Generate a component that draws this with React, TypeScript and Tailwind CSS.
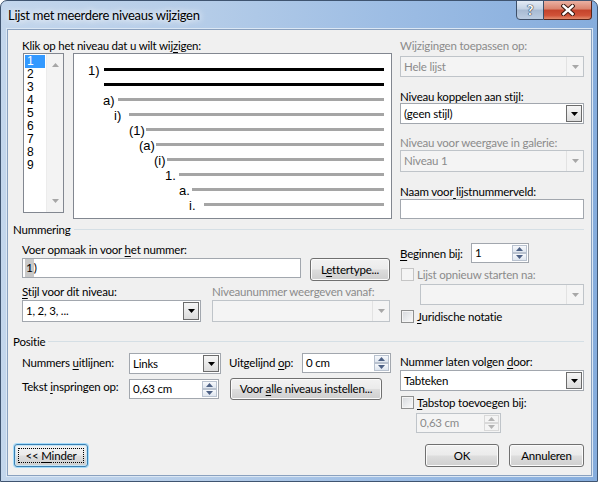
import React from 'react'

const UI = "font-['Lato','Noto_Sans',sans-serif] text-[11.5px] tracking-[-0.2px]"

function U({ children }: { children: React.ReactNode }) {
  return <span className="underline decoration-1 underline-offset-[2px]">{children}</span>
}

function Label({
  children,
  disabled,
  className = ''
}: {
  children: React.ReactNode
  disabled?: boolean
  className?: string
}) {
  return (
    <div
      className={`h-[13px] shrink-0 whitespace-nowrap leading-[13px] ${
        disabled ? 'text-[#8b8b8b]' : 'text-black'
      } ${className}`}
    >
      {children}
    </div>
  )
}

function Tri({ up, color }: { up?: boolean; color: string }) {
  return (
    <svg width="7" height="4" viewBox="0 0 7 4">
      <polygon points={up ? '0,4 7,4 3.5,0' : '0,0 7,0 3.5,4'} fill={color} />
    </svg>
  )
}

function Combo({
  text,
  disabled,
  className = ''
}: {
  text?: string
  disabled?: boolean
  className?: string
}) {
  return (
    <div
      className={`flex shrink-0 border ${
        disabled ? 'border-[#bfc4c9] bg-[#f4f4f4]' : 'border-[#a2a7ae] bg-white'
      } ${className}`}
    >
      <div
        className={`flex flex-1 items-center pl-[3px] whitespace-nowrap ${
          disabled ? 'text-[#8b8b8b]' : 'text-black'
        }`}
      >
        <span>{text}</span>
      </div>
      {disabled ? (
        <div className="flex w-[17px] items-center justify-center border-l border-[#e2e2e2]">
          <Tri color="#a7a7a7" />
        </div>
      ) : (
        <div className="my-px mr-px flex w-[16px] items-center justify-center border border-[#6b6b6b] bg-[linear-gradient(#f6f6f6,#dcdcdc)]">
          <Tri color="#000" />
        </div>
      )}
    </div>
  )
}

function Spin({
  text,
  disabled,
  className = ''
}: {
  text: string
  disabled?: boolean
  className?: string
}) {
  const arrow = disabled ? '#b3b3b3' : '#4d6185'
  const half = disabled
    ? 'flex flex-1 items-center justify-center border border-[#d9d9d9] bg-[#f4f4f4]'
    : 'flex flex-1 items-center justify-center border border-[#b9c2cf] bg-[linear-gradient(#f7f9fc,#dfe6ef)]'
  return (
    <div
      className={`flex shrink-0 border ${
        disabled ? 'border-[#bfc4c9] bg-[#f4f4f4]' : 'border-[#a2a7ae] bg-white'
      } ${className}`}
    >
      <div
        className={`flex flex-1 items-center pl-[3px] whitespace-nowrap ${
          disabled ? 'text-[#8b8b8b]' : 'text-black'
        }`}
      >
        <span>{text}</span>
      </div>
      <div className="my-px mr-px flex w-[15px] flex-col">
        <div className={half}>
          <Tri up color={arrow} />
        </div>
        <div className={half}>
          <Tri color={arrow} />
        </div>
      </div>
    </div>
  )
}

function Btn({
  children,
  focused,
  className = ''
}: {
  children: React.ReactNode
  focused?: boolean
  className?: string
}) {
  return (
    <div
      className={`flex shrink-0 items-center justify-center rounded-[3px] border bg-[linear-gradient(180deg,#f2f2f2_0%,#ebebeb_48%,#dddddd_52%,#cfcfcf_100%)] text-black ${
        focused
          ? 'border-[#3c7fb1] shadow-[0_0_0_1px_#a6dcfb,inset_0_0_0_1px_#c4e5f6]'
          : 'border-[#707070] shadow-[inset_0_0_0_1px_#fbfbfb]'
      } ${className}`}
    >
      {focused ? (
        <div className="flex h-[15px] w-[calc(100%-6px)] items-center justify-center border border-dotted border-black">
          <span className="whitespace-nowrap">{children}</span>
        </div>
      ) : (
        <span className="whitespace-nowrap">{children}</span>
      )}
    </div>
  )
}

function Check({ disabled }: { disabled?: boolean }) {
  return (
    <div
      className={`h-[13px] w-[13px] shrink-0 border ${
        disabled
          ? 'border-[#c5c5c5] bg-[#f4f4f4]'
          : 'border-[#8e8f8f] bg-[linear-gradient(135deg,#d5d8dc,#fbfbfb)] shadow-[inset_0_0_0_1px_#f4f4f4]'
      }`}
    />
  )
}

function Group({ title, className = '' }: { title: string; className?: string }) {
  return (
    <div className={`ml-[5px] mr-[7px] flex h-[13px] items-center ${className}`}>
      <span className="leading-[13px] text-black">{title}</span>
      <div className="ml-[3px] h-px flex-1 bg-[#d5dfe5]" />
    </div>
  )
}

const rows = [
  { pl: 'pl-[14px]', tw: 'w-[16px]', t: '1)', dark: true },
  { pl: 'pl-[14px]', tw: 'w-[16px]', t: '', dark: true },
  { pl: 'pl-[29px]', tw: 'w-[15px]', t: 'a)' },
  { pl: 'pl-[40px]', tw: 'w-[15px]', t: 'i)' },
  { pl: 'pl-[55px]', tw: 'w-[17px]', t: '(1)' },
  { pl: 'pl-[65px]', tw: 'w-[17px]', t: '(a)' },
  { pl: 'pl-[80px]', tw: 'w-[13px]', t: '(i)' },
  { pl: 'pl-[91px]', tw: 'w-[14px]', t: '1.' },
  { pl: 'pl-[105px]', tw: 'w-[13px]', t: 'a.' },
  { pl: 'pl-[115px]', tw: 'w-[15px]', t: 'i.' }
]

function Preview() {
  return (
    <div className="ml-[9px] h-[166px] w-[319px] border border-[#828790] bg-white pt-[8px] pr-[7px] font-['Liberation_Sans',Arial,sans-serif] text-[13px] tracking-normal text-black">
      {rows.map((r, i) => (
        <div key={i} className={`flex h-[15px] items-center ${r.pl}`}>
          <span className={`${r.tw} shrink-0 pt-[2px] leading-[13px]`}>{r.t}</span>
          <div className={`h-[3px] flex-1 ${r.dark ? 'bg-black' : 'bg-[#a5a5a5]'}`} />
        </div>
      ))}
    </div>
  )
}

function LevelList() {
  const levels = ['1', '2', '3', '4', '5', '6', '7', '8', '9']
  return (
    <div className="ml-px flex h-[160px] w-[41px] border border-[#828790] bg-white font-['Liberation_Sans',Arial,sans-serif] text-[12px] tracking-normal">
      <div className="w-[22px] px-px pt-px">
        {levels.map((l, i) => (
          <div
            key={l}
            className={`h-[13px] pl-[2px] leading-[13px] ${
              i === 0 ? 'bg-[#3399ff] text-white' : 'text-black'
            }`}
          >
            {l}
          </div>
        ))}
      </div>
      <div className="flex w-[17px] flex-col items-center justify-between border-l border-[#ececec] bg-[#f3f3f3] py-[9px]">
        <Tri up color="#a6a6a6" />
        <Tri color="#a6a6a6" />
      </div>
    </div>
  )
}

export default function App() {
  return (
    <div className={`${UI} flex h-[482px] w-[598px] flex-col overflow-hidden rounded-t-[7px] border border-[#3f5470] bg-[linear-gradient(90deg,#c3d6ec_0%,#b4cce8_35%,#9dbde4_65%,#86addd_100%)] pl-[6px] pr-[5px] pb-[5px]`}>
      {/* title bar */}
      <div className="flex h-[28px] shrink-0 items-start">
        <div className="pl-px pt-[6px] text-[13px] leading-[17px] tracking-[-0.3px] text-black [text-shadow:0_0_6px_#ffffff,0_0_10px_#ffffff]">
          Lijst met meerdere niveaus wijzigen
        </div>
        <div className="-mt-px ml-auto flex h-[20px]">
          <div className="flex w-[28px] items-center justify-center rounded-bl-[4px] border border-[#3d4f68] bg-[linear-gradient(#e3ebf5_0%,#c3d2e4_45%,#a7bad2_50%,#bccde2_100%)] text-[14px] font-bold leading-none text-white [text-shadow:0_0_1px_#1f2d40,0_0_1px_#1f2d40,0_0_1px_#1f2d40]">
            ?
          </div>
          <div className="flex w-[48px] items-center justify-center rounded-br-[4px] border border-l-0 border-[#5a2418] bg-[linear-gradient(#eab1a3_0%,#d9836d_45%,#c4432b_50%,#d05238_80%,#e28c6d_100%)]">
            <svg width="14" height="12" viewBox="0 0 14 12">
              <path d="M2.5 2 L11.5 10 M11.5 2 L2.5 10" stroke="#3b1a12" strokeWidth="4.4" strokeLinecap="square" />
              <path d="M2.5 2 L11.5 10 M11.5 2 L2.5 10" stroke="#ffffff" strokeWidth="2.4" strokeLinecap="square" />
            </svg>
          </div>
        </div>
      </div>

      {/* client area */}
      <div className="flex flex-1 flex-col border border-[#8aa1bf] bg-[#f0f0f0] shadow-[0_0_0_1px_#dbe7f4]">
        {/* top section */}
        <div className="mt-[9px] flex">
          <div className="ml-[14px] flex w-[370px] flex-col">
            <Label>
              Klik op het niveau dat u wilt wij<U>z</U>igen:
            </Label>
            <div className="mt-px flex items-start">
              <LevelList />
              <Preview />
            </div>
          </div>
          <div className="ml-[8px] flex w-[184px] flex-col">
            <Label disabled>Wijzigingen toepassen op:</Label>
            <Combo disabled text="Hele lijst" className="mt-[4px] h-[21px]" />
            <Label className="mt-[13px]">
              Niveau <U>k</U>oppelen aan stijl:
            </Label>
            <Combo text="(geen stijl)" className="h-[21px]" />
            <Label disabled className="mt-[12px]">
              Niveau voor weergave in galerie:
            </Label>
            <Combo disabled text="Niveau 1" className="mt-px h-[22px]" />
            <Label className="mt-[13px]">
              Naam voor<U> </U>lijstnummerveld:
            </Label>
            <div className="mt-px h-[20px] border border-[#a2a7ae] bg-white" />
          </div>
        </div>

        {/* Nummering */}
        <Group title="Nummering" className="mt-[4px]" />
        <div className="flex">
          <div className="ml-[14px] flex w-[368px] flex-col">
            <Label className="mt-[7px]">
              Voer opmaak in voor <U>h</U>et nummer:
            </Label>
            <div className="mt-[2px] flex items-start">
              <div className="flex h-[20px] w-[279px] items-center border border-[#a2a7ae] bg-white pl-[2px] text-[12px]">
                <span className="bg-[#c9c9c9] px-px">1</span>
                <span>)</span>
              </div>
              <Btn className="ml-[9px] h-[23px] w-[80px]">
                L<U>e</U>ttertype...
              </Btn>
            </div>
            <div className="mt-[4px] flex">
              <Label className="w-[190px]">
                <U>S</U>tijl voor dit niveau:
              </Label>
              <Label disabled>Niveaunummer weergeven vanaf:</Label>
            </div>
            <div className="mt-[2px] flex">
              <Combo text="1, 2, 3, ..." className="h-[22px] w-[179px]" />
              <Combo disabled className="ml-[11px] h-[22px] w-[178px]" />
            </div>
          </div>
          <div className="ml-[10px] flex w-[184px] flex-col">
            <div className="mt-[7px] flex items-center">
              <Label className="w-[71px]">
                <U>B</U>eginnen bij:
              </Label>
              <Spin text="1" className="h-[20px] w-[58px]" />
            </div>
            <div className="mt-[5px] flex items-center">
              <div className="ml-px">
                <Check disabled />
              </div>
              <Label disabled className="ml-[3px]">
                Lijst opnieuw starten na:
              </Label>
            </div>
            <Combo disabled className="ml-[20px] mt-[3px] h-[21px] w-[164px]" />
            <div className="mt-[5px] flex items-center">
              <div className="ml-px">
                <Check />
              </div>
              <Label className="ml-[3px]">
                <U>J</U>uridische notatie
              </Label>
            </div>
          </div>
        </div>

        {/* Positie */}
        <Group title="Positie" className="mt-[12px]" />
        <div className="flex">
          <div className="ml-[14px] flex w-[368px] flex-col">
            <div className="mt-[5px] flex items-start">
              <Label className="w-[107px] pt-[3px]">
                Nummers <U>u</U>itlijnen:
              </Label>
              <Combo text="Links" className="h-[21px] w-[92px]" />
              <Label className="ml-[8px] w-[73px] pt-[3px]">
                Uitgelijnd <U>o</U>p:
              </Label>
              <Spin text="0 cm" className="h-[20px] w-[89px]" />
            </div>
            <div className="mt-[4px] flex items-start">
              <Label className="w-[107px] pt-[2px]">
                Tekst <U>i</U>nspringen op:
              </Label>
              <Spin text="0,63 cm" className="mt-px h-[20px] w-[90px]" />
              <Btn className="ml-[11px] h-[22px] w-[152px]">
                Voor <U>a</U>lle niveaus instellen...
              </Btn>
            </div>
          </div>
          <div className="ml-[10px] flex w-[184px] flex-col">
            <Label className="mt-[7px]">
              Nummer laten volgen <U>d</U>oor:
            </Label>
            <Combo text="Tabteken" className="mt-[2px] h-[21px]" />
            <div className="mt-[5px] flex items-center">
              <div className="ml-px">
                <Check />
              </div>
              <Label className="ml-[3px]">
                <U>T</U>abstop toevoegen bij:
              </Label>
            </div>
            <Spin disabled text="0,63 cm" className="ml-[16px] mt-[4px] h-[20px] w-[85px]" />
          </div>
        </div>

        {/* buttons */}
        <div className="mb-[8px] mt-auto flex">
          <Btn focused className="ml-[6px] h-[23px] w-[74px]">
            &lt;&lt; <U>M</U>inder
          </Btn>
          <Btn className="ml-auto h-[23px] w-[74px]">OK</Btn>
          <Btn className="ml-[10px] mr-[7px] h-[23px] w-[75px]">Annuleren</Btn>
        </div>
      </div>
    </div>
  )
}
